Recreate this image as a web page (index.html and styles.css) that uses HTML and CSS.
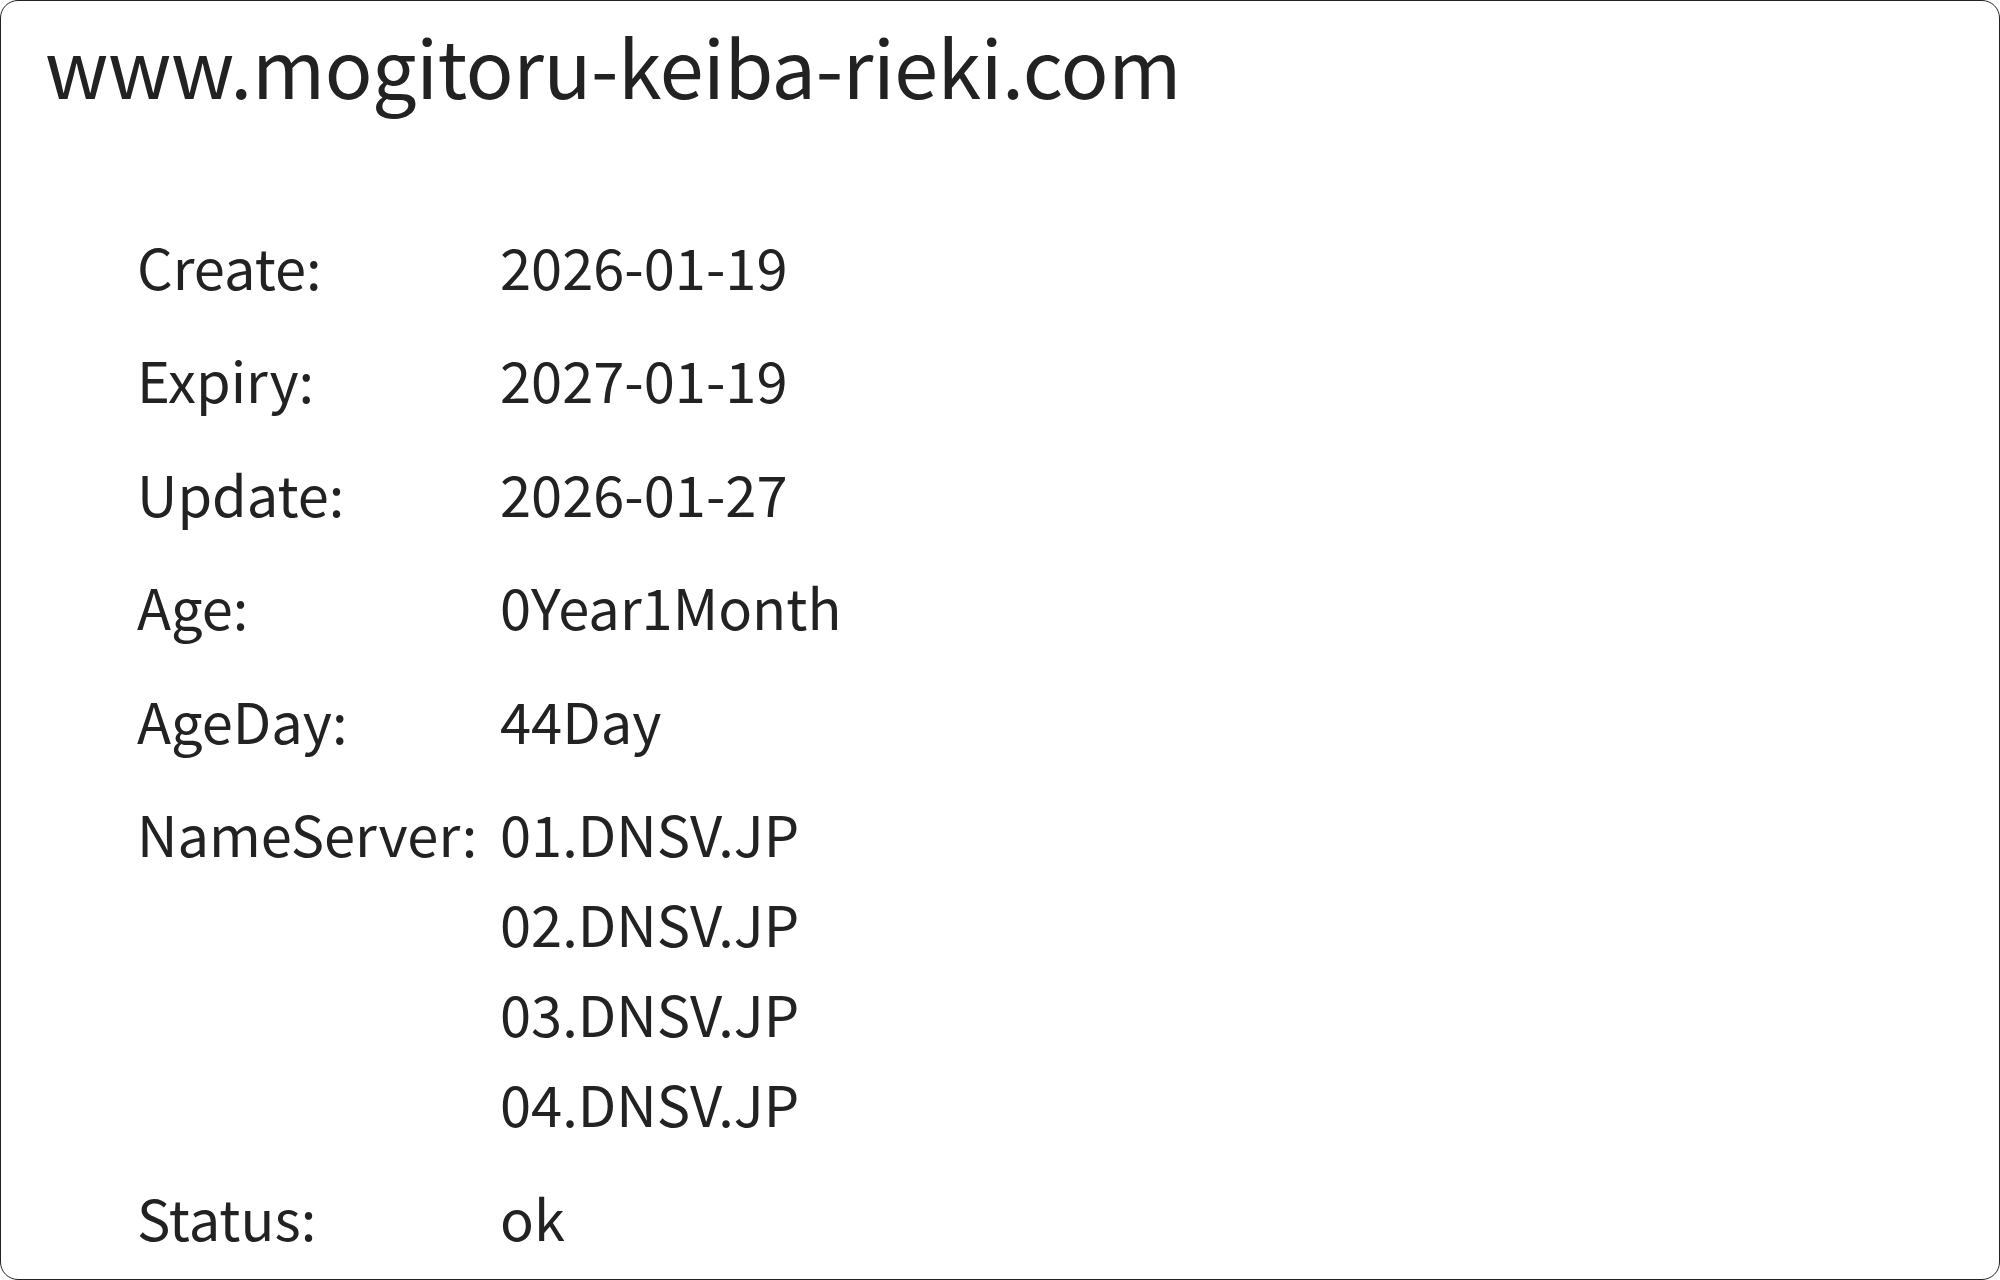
FILE: index.html
```html
<!DOCTYPE html>
<html>
<head>
<meta charset="utf-8">
<link rel="stylesheet" href="styles.css">
</head>
<body>
<div class="card">
  <h1 class="title">www.mogitoru-keiba-rieki.com</h1>
  <div class="info">
    <div class="label">Create:</div><div class="value">2026-01-19</div>
    <div class="label">Expiry:</div><div class="value">2027-01-19</div>
    <div class="label">Update:</div><div class="value">2026-01-27</div>
    <div class="label">Age:</div><div class="value">0Year1Month</div>
    <div class="label">AgeDay:</div><div class="value">44Day</div>
    <div class="label">NameServer:</div><div class="value">01.DNSV.JP<br>02.DNSV.JP<br>03.DNSV.JP<br>04.DNSV.JP</div>
    <div class="label">Status:</div><div class="value">ok</div>
  </div>
</div>
</body>
</html>
```
FILE: styles.css
```css
html, body {
  margin: 0;
  padding: 0;
  background: #fff;
}
body {
  font-family: "Noto Sans CJK JP", "Noto Sans", sans-serif;
  color: #222;
}
.card {
  box-sizing: border-box;
  width: 2000px;
  height: 1280px;
  border: 1px solid #222;
  border-radius: 18px;
  padding: 0 44px;
  overflow: hidden;
}
.title {
  margin: 0;
  padding-top: 9px;
  font-size: 79px;
  font-weight: 400;
  line-height: 1.4;
  letter-spacing: -0.4px;
}
.info {
  display: grid;
  grid-template-columns: 363px auto;
  justify-content: start;
  row-gap: 23.5px;
  margin-top: 100px;
  padding-left: 92px;
  font-size: 56px;
  line-height: 90px;
}
```
